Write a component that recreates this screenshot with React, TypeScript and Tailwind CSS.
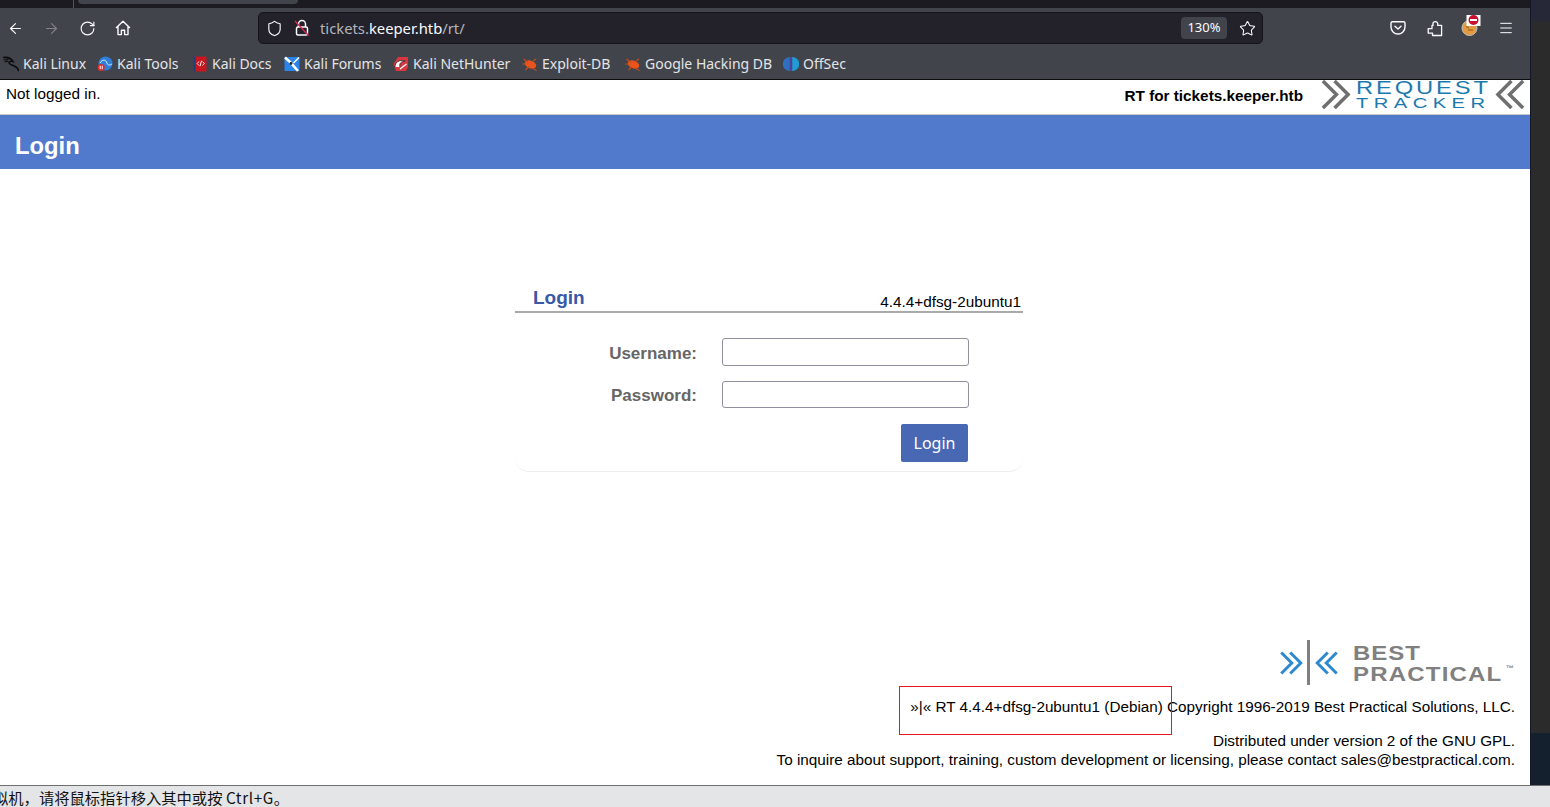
import React from "react";
import { ArrowLeft, ArrowRight, RotateCw, Shield, Star, Menu } from "lucide-react";

const Home = () => (
  <svg width="16" height="16" viewBox="0 0 16 16" fill="none" stroke="#fbfbfe" strokeWidth="1.4" strokeLinejoin="round">
    <path d="M1 8 8 1.2 15 8M3 6.2V14.6H6.4V10.2H9.6V14.6H13V6.2" />
  </svg>
);

const Pocket = () => (
  <svg width="16" height="16" viewBox="0 0 16 16" fill="none" stroke="#fbfbfe" strokeWidth="1.4" strokeLinecap="round" strokeLinejoin="round">
    <path d="M2.5 1.8H13.5A1.5 1.5 0 0 1 15 3.3V7A7 7 0 0 1 1 7V3.3A1.5 1.5 0 0 1 2.5 1.8Z" />
    <path d="M5 6.2 8 9 11 6.2" />
  </svg>
);

const PuzzleIcon = () => (
  <svg width="16" height="17" viewBox="0 0 16 16" fill="none" stroke="#fbfbfe" strokeWidth="1.3" strokeLinejoin="round">
    <path d="M1.2 8.2H5V4.8H6.2C5.4 3 6.2 1.4 8 1.2 10 1 11.4 2.8 10.6 4.8H14.6V15H5.5V12.6H1.2Z" />
  </svg>
);

const StrikeLock = () => (
  <svg width="16" height="18" viewBox="0 0 16 18" fill="none">
    <path d="M4.5 8V5a3.5 3.5 0 0 1 7 0v3" stroke="#fbfbfe" strokeWidth="1.5" />
    <rect x="2.5" y="8" width="11" height="8" rx="1.5" stroke="#fbfbfe" strokeWidth="1.5" />
    <path d="M1 2 14.5 16.5" stroke="#e22850" strokeWidth="1.3" />
  </svg>
);

const Addon = () => (
  <svg width="20" height="24" viewBox="0 0 20 24">
    <circle cx="8.5" cy="15" r="7.5" fill="#e59a3e" stroke="#bfbfbf" strokeWidth="1" />
    <path d="M5 13.5 8 15 M7 17H12" stroke="#8a5a1e" strokeWidth="1" fill="none" />
    <rect x="5.5" y="2" width="14" height="11" fill="#fff" />
    <circle cx="12.5" cy="7" r="5" fill="#c8102e" />
    <rect x="9" y="6" width="7" height="2" fill="#fff" />
  </svg>
);

const KaliIcon = () => (
  <svg width="16" height="16" viewBox="0 0 16 16" fill="none" stroke="#0b0b0d" strokeWidth="1.6" strokeLinecap="round">
    <path d="M0.5 1.5C4 1 8 2.5 10 5.5 7.5 5 6 5.5 6 7 7.5 10 14 8.5 15.5 14.5" />
    <path d="M1 4 5 3.5M2 6 5 5" strokeWidth="1.1" />
  </svg>
);
const ToolsIcon = () => (
  <svg width="16" height="16" viewBox="0 0 16 16">
    <circle cx="8.5" cy="7.5" r="7" fill="#2f7ed8" />
    <path d="M3 7C6 2.5 9 4 10 7S13 9 15 8" stroke="#dcefff" strokeWidth="1" fill="none" />
    <circle cx="4.2" cy="11.5" r="3.6" fill="#e02b2b" />
    <rect x="2.7" y="9.8" width="1" height="3.4" fill="#fff" />
    <rect x="4.7" y="9.8" width="1" height="3.4" fill="#fff" />
  </svg>
);
const DocsIcon = () => (
  <svg width="14" height="16" viewBox="0 0 14 16">
    <rect x="0.5" y="0.5" width="13" height="15" rx="1" fill="#c7161d" />
    <rect x="0.5" y="0.5" width="2" height="15" fill="#1c3f80" />
    <path d="M6 5.5 4.2 7.5 6 9.5M9.5 5.5 11.3 7.5 9.5 9.5M8.5 4.8 7 10.2" stroke="#fff" strokeWidth="0.9" fill="none" />
  </svg>
);
const ForumsIcon = () => (
  <svg width="16" height="16" viewBox="0 0 16 16">
    <rect x="0.5" y="1" width="15" height="14" fill="#2b84e8" />
    <path d="M1 1.5 6 6 14 15" stroke="#fff" strokeWidth="2.6" fill="none" />
    <path d="M15 1.5 9.5 7" stroke="#fff" strokeWidth="1.4" fill="none" />
    <circle cx="7" cy="7.5" r="1.4" fill="#222" />
  </svg>
);
const HunterIcon = () => (
  <svg width="16" height="16" viewBox="0 0 16 16">
    <path d="M5 1H15V11L13 15H3L0.5 8Z" fill="#d9363e" />
    <path d="M2 11C2 6 6 3.5 12 5 8 5.5 6 7.5 7 11" fill="#fff" stroke="#222" strokeWidth="0.8" />
    <path d="M7 13 13.5 8" stroke="#fff" strokeWidth="1.4" />
  </svg>
);
const BugIcon = () => (
  <svg width="16" height="16" viewBox="0 0 16 16">
    <ellipse cx="8.5" cy="8.5" rx="6" ry="3.8" fill="#e8541c" transform="rotate(20 8.5 8.5)" />
    <path d="M1.5 3 6 6.5M3.5 14 7 10.5M11 12.5 14.5 14.5M11 5 14 3M0.5 8H4" stroke="#c84e1a" strokeWidth="1.1" />
  </svg>
);
const OffSecIcon = () => (
  <svg width="16" height="16" viewBox="0 0 16 16">
    <path d="M6.8 1A7 7 0 0 0 6.8 15Z" fill="#2f6fc0" />
    <path d="M9.2 1A7 7 0 0 1 9.2 15Z" fill="#1f9bd8" />
    <rect x="7.3" y="1" width="1.4" height="14" fill="#5b3fb5" />
  </svg>
);

const bookmarks: [React.ReactNode, string, string][] = [
  [<KaliIcon />, "Kali Linux", "w-[94px]"],
  [<ToolsIcon />, "Kali Tools", "w-[95px]"],
  [<DocsIcon />, "Kali Docs", "w-[92px]"],
  [<ForumsIcon />, "Kali Forums", "w-[109px]"],
  [<HunterIcon />, "Kali NetHunter", "w-[129px]"],
  [<BugIcon />, "Exploit-DB", "w-[103px]"],
  [<BugIcon />, "Google Hacking DB", "w-[158px]"],
  [<OffSecIcon />, "OffSec", "w-[70px]"],
];

const Chevrons = ({ flip, color, size, weight }: { flip?: boolean; color: string; size: number; weight: number }) => (
  <svg width={size} height={size} viewBox="0 0 32 32" fill="none" stroke={color} strokeWidth={weight} className={flip ? "-scale-x-100" : ""}>
    <path d="M3 2 17 16 3 30M15 2 29 16 15 30" />
  </svg>
);

const browserFont = "font-['Noto_Sans','Open_Sans',sans-serif]";

export default function App() {
  return (
    <div className="flex w-[1550px] h-[807px] flex-col overflow-hidden font-['Liberation_Sans',Arial,sans-serif]">
      <div className="flex h-[785px]">
        <div className="flex w-[1530px] flex-col">
          {/* tab strip */}
          <div className="flex h-2 bg-[#1c1b22]">
            <div className="ml-[73px] h-full w-px bg-[#55565c]" />
            <div className="ml-1 h-1 w-[220px] rounded-b bg-[#42444c]" />
          </div>

          {/* toolbar */}
          <div className={`flex h-[40px] items-center bg-[#42444c] text-[#fbfbfe] ${browserFont}`}>
            <div className="flex w-[258px] items-center pl-[7px]">
              <ArrowLeft size={17} color="#fbfbfe" strokeWidth={1.6} />
              <ArrowRight size={17} color="#83848a" strokeWidth={1.6} className="ml-[19px]" />
              <RotateCw size={17} color="#fbfbfe" strokeWidth={1.6} className="ml-[19px]" />
              <div className="ml-[19px]"><Home /></div>
            </div>
            <div className="flex h-[32px] w-[1005px] items-center rounded-[5px] border border-[#14141a] bg-[#23222b] pl-[7px] pr-[6px]">
              <Shield size={17} color="#fbfbfe" strokeWidth={1.6} />
              <div className="ml-[11px]"><StrikeLock /></div>
              <div className="ml-[10px] text-[14.8px] text-[#b4b4ba]">
                tickets.<span className="text-[#fbfbfe]">keeper.htb</span>/rt/
              </div>
              <div className="ml-auto flex h-[22px] w-[46px] items-center justify-center rounded bg-[#42444c] text-[13px]">130%</div>
              <Star size={17} color="#fbfbfe" strokeWidth={1.5} className="ml-[12px]" />
            </div>
            <div className="ml-[127px]"><Pocket /></div>
            <div className="ml-[21px]"><PuzzleIcon /></div>
            <div className="ml-[18px] -mt-[6px]"><Addon /></div>
            <Menu size={16} color="#fbfbfe" strokeWidth={1.5} className="ml-[17px]" />
          </div>

          {/* bookmarks */}
          <div className={`flex h-[32px] items-center border-b border-[#0c0c0d] bg-[#42444c] pl-[3px] text-[14px] text-[#e4e4e6] ${browserFont}`}>
            {bookmarks.map(([icon, label, w]) => (
              <div key={label} className={`flex shrink-0 items-center gap-[4px] ${w}`}>
                <span className="flex w-[16px] justify-center">{icon}</span>
                <span className="whitespace-nowrap">{label}</span>
              </div>
            ))}
          </div>

          {/* page */}
          <div className="relative flex flex-1 flex-col bg-white text-black">
            <div className="flex h-[35px] border-b border-[#c8c8c8]">
              <div className="pl-[6px] pt-[5px] text-[15.3px] leading-[18px]">Not logged in.</div>
              <div className="ml-auto pt-[7px] text-[15.3px] font-bold leading-[18px]">RT for tickets.keeper.htb</div>
              <div className="ml-[17px] flex h-[29px] w-[210px] items-center overflow-hidden">
                <Chevrons color="#6f6f6f" size={31} weight={3.6} />
                <div className="ml-[5px] flex w-[139px] flex-col items-start text-[#1a7ab0]">
                  <span className="inline-block origin-left scale-x-[1.25] whitespace-nowrap text-[19px] leading-[15px] tracking-[2.3px]">REQUEST</span>
                  <span className="inline-block origin-left scale-x-[1.3] whitespace-nowrap text-[15.5px] leading-[15px] tracking-[4.2px]">TRACKER</span>
                </div>
                <Chevrons flip color="#6f6f6f" size={31} weight={3.6} />
              </div>
            </div>

            <div className="flex h-[54px] items-center bg-[#517acc] pl-[15px] pt-[8px] text-[23.8px] font-bold text-white">Login</div>

            <div className="ml-[515px] mt-[116px] flex w-[508px] flex-col rounded-b-[14px] border-b border-[#eeeeee]">
              <div className="flex h-[28px] items-end border-b-2 border-[#a9a9a9] pl-[18px] pr-[2px]">
                <span className="pb-[1px] text-[19px] font-bold leading-[24px] text-[#3858a8]">Login</span>
                <span className="ml-auto text-[15.3px] leading-[18px]">4.4.4+dfsg-2ubuntu1</span>
              </div>
              <div className="mt-[25px] flex items-center">
                <label className="w-[182px] pt-[3px] text-right text-[17px] font-bold text-[#666666]">Username:</label>
                <input className="ml-[25px] h-[28px] w-[247px] rounded-[3px] border border-[#8f8f9d] bg-white" />
              </div>
              <div className="mt-[14px] flex items-center">
                <label className="w-[182px] pt-[2px] text-right text-[17px] font-bold text-[#666666]">Password:</label>
                <input className="ml-[25px] h-[27px] w-[247px] rounded-[3px] border border-[#8f8f9d] bg-white" />
              </div>
              <div className="mb-[9px] mt-[16px] flex justify-end pr-[55px]">
                <button className={`h-[38px] w-[67px] rounded-[2px] bg-[#4868b4] text-[16px] text-white ${browserFont}`}>Login</button>
              </div>
            </div>

            <div className="mt-auto flex flex-col items-end pb-[16px] pr-[15px] text-[15.28px] leading-[18px]">
              <div className="flex items-center pr-[1px] text-[#808080]">
                <Chevrons color="#2d8ad0" size={24} weight={4} />
                <div className="mx-[4px] h-[45px] w-[3px] bg-[#808080]" />
                <div className="ml-[1px]"><Chevrons flip color="#2d8ad0" size={24} weight={4} /></div>
                <div className="ml-[14px] flex w-[161px] flex-col items-start font-bold">
                  <span className="inline-block origin-left scale-x-[1.2] text-[20px] leading-[22px] tracking-[0.8px]">BEST</span>
                  <div className="flex w-full items-start">
                    <span className="inline-block origin-left scale-x-[1.2] whitespace-nowrap text-[20px] leading-[20px] tracking-[1px]">PRACTICAL</span>
                    <span className="ml-auto text-[8px] leading-[10px]">™</span>
                  </div>
                </div>
              </div>
              <div className="mt-[13px]">»|« RT 4.4.4+dfsg-2ubuntu1 (Debian) Copyright 1996-2019 Best Practical Solutions, LLC.</div>
              <div className="mt-[16px]">Distributed under version 2 of the GNU GPL.</div>
              <div className="mt-[1px]">To inquire about support, training, custom development or licensing, please contact sales@bestpractical.com.</div>
            </div>

            {/* annotation box over the footer */}
            <div className="absolute left-[899px] top-[606px] h-[49px] w-[273px] border border-[#e8141e]" />
          </div>
        </div>

        {/* desktop behind the window */}
        <div className="flex w-5 flex-col border-l border-[#14172a] bg-[#2b2b2b]">
          <div className="h-[21px] bg-[#262838]" />
          <div className="flex-1" />
          <div className="h-[52px] bg-[#15202e]" />
        </div>
      </div>

      {/* status bar */}
      <div className="flex h-[22px] items-center overflow-hidden border-t border-[#6e6e6e] bg-[#e4e5e7] pt-[2px] font-['Noto_Sans_CJK_SC','Noto_Sans',sans-serif] text-[15.3px] text-[#111]">
        <span className="-ml-[7px] whitespace-nowrap">拟机，请将鼠标指针移入其中或按 <span className="tracking-[0.6px]">Ctrl+G。</span></span>
      </div>
    </div>
  );
}
